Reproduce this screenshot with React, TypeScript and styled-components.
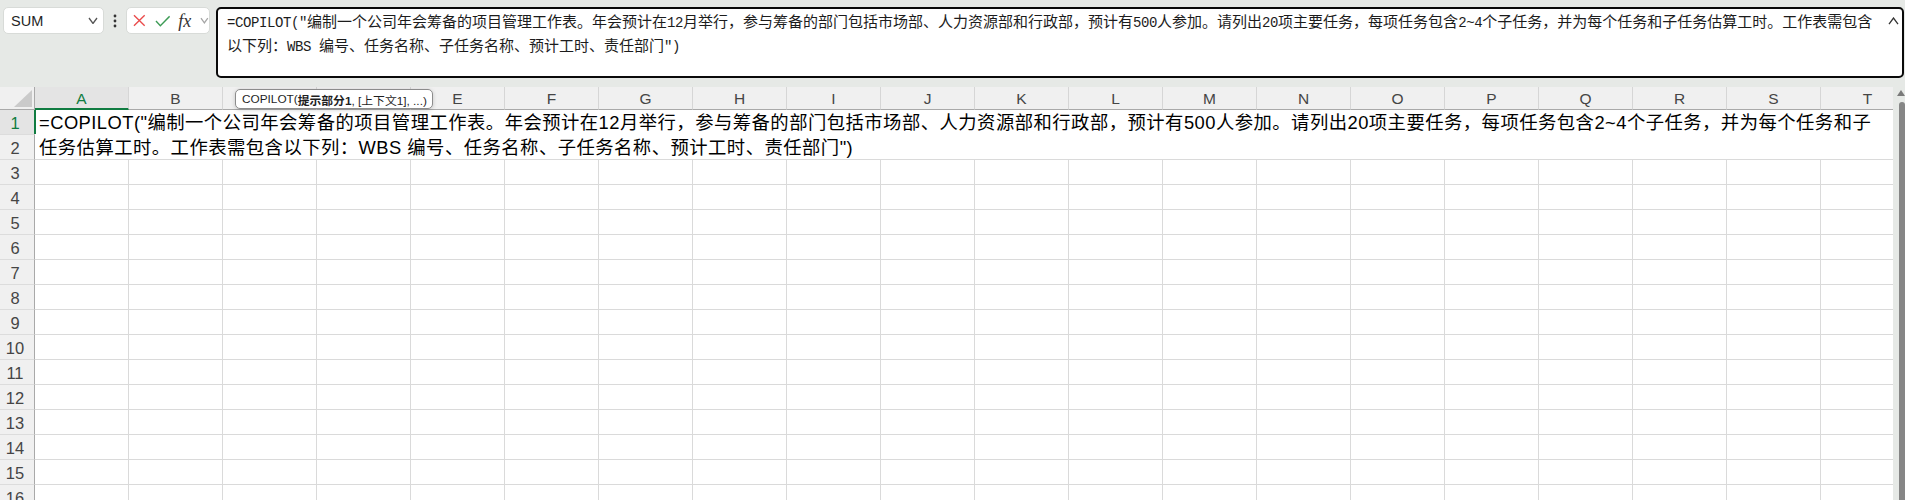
import React from 'react';
import styled, { createGlobalStyle } from 'styled-components';

const COLUMNS = 'ABCDEFGHIJKLMNOPQRST'.split('');
const EMPTY_ROWS = Array.from({ length: 14 }, (_, i) => i + 3);

const GlobalStyle = createGlobalStyle`
  html, body {
    margin: 0;
    padding: 0;
    background: #e6e9e6;
  }
  body {
    font-family: 'Liberation Sans', 'Noto Sans CJK SC', sans-serif;
  }
`;

const Window = styled.div`
  width: 1905px;
  height: 500px;
  overflow: hidden;
  background: #e6e9e6;
  display: flex;
  flex-direction: column;
`;

/* ---------- formula bar ---------- */

const FormulaBar = styled.div`
  display: flex;
  align-items: flex-start;
  height: 87px;
  flex: none;
  box-sizing: border-box;
  padding: 7px 1px 0 3px;
`;

const NameBox = styled.div`
  width: 101px;
  height: 27px;
  box-sizing: border-box;
  flex: none;
  background: #fff;
  border: 1px solid #d8dbd8;
  border-radius: 5px;
  display: flex;
  align-items: center;
  justify-content: space-between;
  padding: 0 5px 0 7px;
  font-size: 14.5px;
  color: #242424;
`;

const Kebab = styled.div`
  width: 22px;
  height: 27px;
  flex: none;
  display: flex;
  align-items: center;
  justify-content: center;
`;

const ActionGroup = styled.div`
  width: 84px;
  height: 27px;
  box-sizing: border-box;
  flex: none;
  background: #fff;
  border: 1px solid #d8dbd8;
  border-radius: 5px;
  display: flex;
  align-items: center;
  padding: 0 0 0 6px;
  gap: 9px;
`;

const Fx = styled.span`
  font-family: 'Liberation Serif', serif;
  font-style: italic;
  font-size: 18px;
  color: #333;
  margin-left: -1px;
  line-height: 1;
`;

const FormulaBox = styled.div`
  flex: 1;
  height: 71px;
  margin-left: 6px;
  box-sizing: border-box;
  background: #fff;
  border: 2px solid #0a0a0a;
  border-radius: 5px;
  display: flex;
  align-items: flex-start;
  padding: 1px 2px 0 9px;
`;

const FormulaText = styled.div`
  flex: 1;
  min-width: 0;
  font-family: 'Noto Sans CJK SC', sans-serif;
  font-size: 15px;
  line-height: 22px;
  color: #1c1c1c;
`;

const FormulaLine = styled.div`
  white-space: nowrap;
  overflow: hidden;
`;

const Code = styled.span`
  font-family: 'Liberation Mono', monospace;
  font-size: 14px;
  letter-spacing: -0.4px;
`;

const CollapseButton = styled.div`
  width: 14px;
  height: 22px;
  flex: none;
  display: flex;
  align-items: center;
  justify-content: center;
`;

/* ---------- sheet ---------- */

const Sheet = styled.div`
  flex: 1;
  min-height: 0;
  display: flex;
  gap: 2px;
`;

const GridArea = styled.div`
  width: 1893px;
  flex: none;
  overflow: hidden;
  display: flex;
  flex-direction: column;
  background: #fff;
`;

const ColumnHeaders = styled.div`
  position: relative;
  flex: none;
  height: 23px;
  display: grid;
  grid-template-columns: 35px repeat(20, 94px);
  background: #f0f0f0;
`;

const Corner = styled.div`
  box-sizing: border-box;
  border-right: 1px solid #a9a9a9;
  border-bottom: 1px solid #a9a9a9;
  display: flex;
  align-items: flex-end;
  justify-content: flex-end;
  padding: 0 2px 2px 0;
`;

const ColumnHead = styled.div<{ $active?: boolean }>`
  box-sizing: border-box;
  border-right: 1px solid #d6d6d6;
  border-bottom: ${(p) => (p.$active ? '2px solid #107c41' : '1px solid #a9a9a9')};
  background: ${(p) => (p.$active ? '#e4e4e4' : 'transparent')};
  color: ${(p) => (p.$active ? '#107c41' : '#454545')};
  font-size: 15.5px;
  display: flex;
  align-items: center;
  justify-content: center;
  padding-top: 2px;
`;

const Hint = styled.div`
  position: absolute;
  left: 235px;
  top: 2px;
  height: 20px;
  box-sizing: border-box;
  padding: 0 5px 0 6px;
  display: flex;
  align-items: center;
  background: #fff;
  border: 1px solid #8c8c8c;
  border-radius: 5px;
  box-shadow: 0 1px 4px rgba(0, 0, 0, 0.18);
  font-size: 11.8px;
  color: #1f1f1f;
  white-space: nowrap;

  b {
    font-weight: 700;
  }
`;

const Body = styled.div`
  display: grid;
  grid-template-columns: 35px repeat(20, 94px);
  grid-auto-rows: 25px;
`;

const RowHead = styled.div<{ $active?: boolean }>`
  box-sizing: border-box;
  background: ${(p) => (p.$active ? '#e4e4e4' : '#f0f0f0')};
  border-right: 1px solid #a9a9a9;
  border-bottom: 1px solid #dcdcdc;
  color: ${(p) => (p.$active ? '#107c41' : '#454545')};
  font-size: 16.5px;
  display: flex;
  align-items: center;
  justify-content: center;
  padding: 3px 4px 0 0;
`;

const Cell = styled.div`
  box-sizing: border-box;
  border-right: 1px solid #dadada;
  border-bottom: 1px solid #dadada;
`;

const CellEditor = styled.div`
  position: relative;
  grid-column: 2 / span 20;
  grid-row: span 2;
  box-sizing: border-box;
  border-bottom: 1px solid #dadada;
  padding-left: 4px;
  font-size: 18.33px;
  letter-spacing: 0.47px;
  line-height: 25px;
  color: #000;

  &::before {
    content: '';
    position: absolute;
    left: -1px;
    top: 0;
    width: 2px;
    height: 24px;
    background: #107c41;
  }
`;

const EditorLine = styled.div`
  white-space: nowrap;
`;

const Scrollbar = styled.div`
  width: 10px;
  flex: none;
  display: flex;
  flex-direction: column;
  align-items: flex-end;
  padding-top: 3px;
  gap: 6px;
`;

const Thumb = styled.div`
  width: 6px;
  flex: 1;
  background: #868686;
  border-radius: 3px 3px 0 0;
`;

function Chevron({ up, color, w = 10 }: { up?: boolean; color: string; w?: number }) {
  const h = w * 0.55;
  return (
    <svg width={w} height={h + 2} viewBox={`0 0 ${w} ${h + 2}`}>
      <path
        d={up ? `M1 ${h + 1} L${w / 2} 1 L${w - 1} ${h + 1}` : `M1 1 L${w / 2} ${h + 1} L${w - 1} 1`}
        fill="none"
        stroke={color}
        strokeWidth="1.3"
      />
    </svg>
  );
}

export default function App() {
  return (
    <>
      <GlobalStyle />
      <Window>
        <FormulaBar>
          <NameBox>
            <span>SUM</span>
            <Chevron color="#555" />
          </NameBox>
          <Kebab>
            <svg width="4" height="14" viewBox="0 0 4 14">
              <circle cx="2" cy="2" r="1.4" fill="#333" />
              <circle cx="2" cy="7" r="1.4" fill="#333" />
              <circle cx="2" cy="12" r="1.4" fill="#333" />
            </svg>
          </Kebab>
          <ActionGroup>
            <svg width="13" height="13" viewBox="0 0 13 13">
              <path d="M1 1 L12 12 M12 1 L1 12" stroke="#ea4c4c" strokeWidth="1.4" fill="none" />
            </svg>
            <svg width="16" height="12" viewBox="0 0 16 12">
              <path d="M1 6 L5.5 10.8 L15 1.2" stroke="#3c9b55" strokeWidth="1.4" fill="none" />
            </svg>
            <Fx>fx</Fx>
            <Chevron color="#a6a6a6" w={9} />
          </ActionGroup>
          <FormulaBox>
            <FormulaText>
              <FormulaLine>
                <Code>=COPILOT("</Code>编制一个公司年会筹备的项目管理工作表。年会预计在<Code>12</Code>月举行，参与筹备的部门包括市场部、人力资源部和行政部，预计有<Code>500</Code>人参加。请列出<Code>20</Code>项主要任务，每项任务包含<Code>2~4</Code>个子任务，并为每个任务和子任务估算工时。工作表需包含
              </FormulaLine>
              <FormulaLine>
                以下列：<Code>WBS </Code>编号、任务名称、子任务名称、预计工时、责任部门<Code>")</Code>
              </FormulaLine>
            </FormulaText>
            <CollapseButton>
              <Chevron up color="#333" w={11} />
            </CollapseButton>
          </FormulaBox>
        </FormulaBar>

        <Sheet>
          <GridArea>
            <ColumnHeaders>
              <Corner>
                <svg width="18" height="17" viewBox="0 0 18 17">
                  <polygon points="18,0 18,17 0,17" fill="#cacaca" />
                </svg>
              </Corner>
              {COLUMNS.map((c) => (
                <ColumnHead key={c} $active={c === 'A'}>
                  {c}
                </ColumnHead>
              ))}
              <Hint>
                COPILOT(<b>提示部分1</b>, [上下文1], ...)
              </Hint>
            </ColumnHeaders>

            <Body>
              <RowHead $active>1</RowHead>
              <CellEditor>
                <EditorLine>
                  =COPILOT("编制一个公司年会筹备的项目管理工作表。年会预计在12月举行，参与筹备的部门包括市场部、人力资源部和行政部，预计有500人参加。请列出20项主要任务，每项任务包含2~4个子任务，并为每个任务和子
                </EditorLine>
                <EditorLine>任务估算工时。工作表需包含以下列：WBS 编号、任务名称、子任务名称、预计工时、责任部门")</EditorLine>
              </CellEditor>
              <RowHead>2</RowHead>
              {EMPTY_ROWS.map((r) => (
                <React.Fragment key={r}>
                  <RowHead>{r}</RowHead>
                  {COLUMNS.map((c) => (
                    <Cell key={c} />
                  ))}
                </React.Fragment>
              ))}
            </Body>
          </GridArea>

          <Scrollbar>
            <svg width="8" height="6" viewBox="0 0 8 6">
              <polygon points="4,0 8,6 0,6" fill="#7a7a7a" />
            </svg>
            <Thumb />
          </Scrollbar>
        </Sheet>
      </Window>
    </>
  );
}
